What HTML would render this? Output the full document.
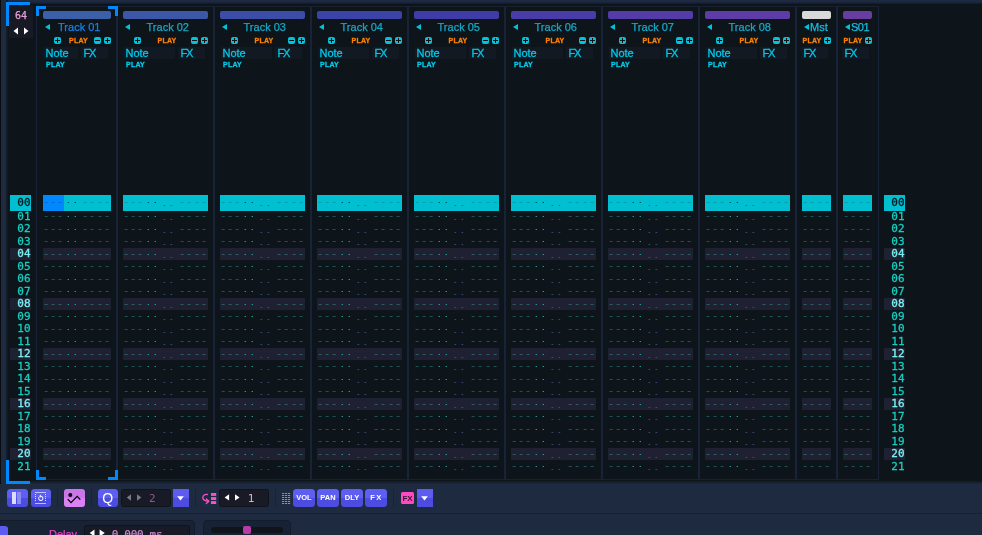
<!DOCTYPE html>
<html><head><meta charset="utf-8"><title>Pattern Editor</title>
<style>
html,body{margin:0;padding:0}
body{width:982px;height:535px;overflow:hidden;position:relative;background:#0d141a;font-family:"Liberation Sans",sans-serif}
#app{position:absolute;left:0;top:0;width:982px;height:535px;overflow:hidden;will-change:transform}
#app div,#app span,#app svg,#app i,#app b{position:absolute;box-sizing:border-box}
.t{white-space:nowrap;line-height:1}
.nm{-webkit-text-stroke:0.25px;font:11px/12px "Liberation Sans",sans-serif;color:#18a8c6;text-align:center;height:12px}
.lb{-webkit-text-stroke:0.3px;font:11px/12px "Liberation Sans",sans-serif;color:#00c8e8;height:12px}
.pl{-webkit-text-stroke:0.3px;font:bold 7px/7px "Liberation Sans",sans-serif;height:7px;letter-spacing:0.25px}
.or{color:#ff8000}
.cy{color:#00ccec}
.pm{width:7px;height:7px;border-radius:2px;background:linear-gradient(#0e141a,#0e141a) center/5px 1px no-repeat,linear-gradient(#0e141a,#0e141a) center/1px 5px no-repeat,#00c4dc}
.mn{width:7px;height:7px;border-radius:2px;background:linear-gradient(#0e141a,#0e141a) center/5px 1px no-repeat,#00c4dc}
.tri{width:0;height:0;border-top:3px solid transparent;border-bottom:3px solid transparent;border-right:5px solid #00c4dc}
.cb{height:8px;border-radius:2px}
.fb{background:#131922;height:12px;top:47px}
.ln{-webkit-text-stroke:0.3px;font:11px/11px "DejaVu Sans Mono","Liberation Mono",monospace;color:#14cfc2;width:21px;height:12px;text-align:right;padding-right:0.4px}
.ln.h4{background:#1f2133;color:#7af0ee}
.ln.h0{color:#021a20;margin-top:1px}
.r{font:11px/11px "DejaVu Sans Mono","Liberation Mono",monospace;height:12px;white-space:pre;color:#1f5253;letter-spacing:0.38px}
.r.h4{background:#1f2133;color:#2c5a5e}
.r.h0{color:#0a9aa8}
.r span,.r i,.r b{top:0;height:100%}
.r span{font-size:12px;letter-spacing:-0.22px;margin-left:-0.4px;margin-top:1px}
.r i{font-style:normal;color:#2a9c98;transform:scaleY(.5);transform-origin:0 7px}
.r.h0 i{color:#07444c}
.r.cur span:first-child{color:#0a68cc}
.r b{font-weight:normal;color:#44548a;margin-top:1px;letter-spacing:-1.02px;transform:scale(1.25,.5);transform-origin:3.3px 8px}
.r.h0 b{color:#0a6f80}
.sep{background:#18233a}
.btn{border-radius:3.5px;background:linear-gradient(#5e5ef3 50%,#4c4ce0 50%)}
.vb{background:#181b26;border:1px solid #10131b;border-radius:2.5px}
.bt{font:bold 7.5px/8px "Liberation Sans",sans-serif;color:#fff;text-align:center;height:8px;width:21.2px}
</style></head><body><div id="app">

<div style="left:0px;top:0px;width:982px;height:4px;background:linear-gradient(#1e2a40 0,#1c2740 50%,#131a27 100%)"></div>
<div style="left:0px;top:0px;width:6px;height:535px;background:#1e2a40"></div>
<div style="left:6px;top:0px;width:2px;height:481px;background:linear-gradient(90deg,#172031,#0f151c)"></div>
<div style="left:0px;top:0px;width:1px;height:506px;background:#080c0e"></div>
<div style="left:0px;top:484px;width:982px;height:51px;background:#1e2a40"></div>
<div style="left:8px;top:481px;width:974px;height:3px;background:linear-gradient(#121923,#1d283d)"></div>
<div style="left:36px;top:479px;width:843px;height:1px;background:#192130"></div>
<div style="left:0px;top:512.6px;width:982px;height:1.5px;background:#172033"></div>
<div class="sep" style="left:35.7px;top:6px;width:1.6px;height:474px;"></div>
<div class="sep" style="left:116px;top:6px;width:2px;height:474px;"></div>
<div class="sep" style="left:213px;top:6px;width:2px;height:474px;"></div>
<div class="sep" style="left:310px;top:6px;width:2px;height:474px;"></div>
<div class="sep" style="left:407px;top:6px;width:2px;height:474px;"></div>
<div class="sep" style="left:504px;top:6px;width:2px;height:474px;"></div>
<div class="sep" style="left:601px;top:6px;width:2px;height:474px;"></div>
<div class="sep" style="left:698px;top:6px;width:2px;height:474px;"></div>
<div class="sep" style="left:795px;top:6px;width:2px;height:474px;"></div>
<div class="sep" style="left:836px;top:6px;width:2px;height:474px;"></div>
<div class="sep" style="left:877.7px;top:6px;width:1.6px;height:474px;"></div>
<div style="left:36px;top:6px;width:843px;height:1px;background:#192130"></div>
<div style="left:6px;top:2px;width:24px;height:3px;background:#0088ff"></div>
<div style="left:6px;top:2px;width:3px;height:24px;background:#0088ff"></div>
<div style="left:6px;top:460px;width:3px;height:24px;background:#0088ff"></div>
<div style="left:6px;top:481px;width:24px;height:3px;background:#0088ff"></div>
<div style="left:9px;top:5px;width:24px;height:33px;background:#171a25"></div>
<div class="t" style="left:9px;top:9.6px;width:24px;height:12px;-webkit-text-stroke:0.25px;font:10px/12px 'DejaVu Sans Mono','Liberation Mono',monospace;color:#e6a0d8;text-align:center">64</div>
<svg style="left:13px;top:26.5px" width="16" height="8" viewBox="0 0 16 8"><path d="M0.5 4 L5 0.5 L5 7.5 Z M15.5 4 L11 0.5 L11 7.5 Z" fill="#fff"/></svg>
<div class="cb" style="left:43px;top:11px;width:68px;height:8px;background:#3c60a8"></div>
<div class="tri" style="left:44.5px;top:23.5px"></div>
<div class="t nm" style="left:49.25px;top:21px;width:60px;color:#1482ee;">Track 01</div>
<div class="pm" style="left:54px;top:37px"></div>
<div class="t pl or" style="left:69.0px;top:37px;width:19px">PLAY</div>
<div class="mn" style="left:94px;top:37px"></div>
<div class="pm" style="left:104px;top:37px"></div>
<div class="fb" style="left:44px;width:34px"></div>
<div class="t lb" style="left:45.5px;top:47px">Note</div>
<div class="fb" style="left:81px;width:27px"></div>
<div class="t lb" style="left:83.5px;top:47px;letter-spacing:-1.2px">FX</div>
<div class="t pl cy" style="left:46px;top:61px">PLAY</div>
<div class="cb" style="left:123px;top:11px;width:85px;height:8px;background:#3c57a8"></div>
<div class="tri" style="left:124.5px;top:23.5px"></div>
<div class="t nm" style="left:137.75px;top:21px;width:60px;">Track 02</div>
<div class="pm" style="left:134px;top:37px"></div>
<div class="t pl or" style="left:157.5px;top:37px;width:19px">PLAY</div>
<div class="mn" style="left:191px;top:37px"></div>
<div class="pm" style="left:201px;top:37px"></div>
<div class="fb" style="left:124px;width:51px"></div>
<div class="t lb" style="left:125.5px;top:47px">Note</div>
<div class="fb" style="left:178px;width:27px"></div>
<div class="t lb" style="left:180.5px;top:47px;letter-spacing:-1.2px">FX</div>
<div class="t pl cy" style="left:126px;top:61px">PLAY</div>
<div class="cb" style="left:220px;top:11px;width:85px;height:8px;background:#3c4da8"></div>
<div class="tri" style="left:221.5px;top:23.5px"></div>
<div class="t nm" style="left:234.75px;top:21px;width:60px;">Track 03</div>
<div class="pm" style="left:231px;top:37px"></div>
<div class="t pl or" style="left:254.5px;top:37px;width:19px">PLAY</div>
<div class="mn" style="left:288px;top:37px"></div>
<div class="pm" style="left:298px;top:37px"></div>
<div class="fb" style="left:221px;width:51px"></div>
<div class="t lb" style="left:222.5px;top:47px">Note</div>
<div class="fb" style="left:275px;width:27px"></div>
<div class="t lb" style="left:277.5px;top:47px;letter-spacing:-1.2px">FX</div>
<div class="t pl cy" style="left:223px;top:61px">PLAY</div>
<div class="cb" style="left:317px;top:11px;width:85px;height:8px;background:#3c43a8"></div>
<div class="tri" style="left:318.5px;top:23.5px"></div>
<div class="t nm" style="left:331.75px;top:21px;width:60px;">Track 04</div>
<div class="pm" style="left:328px;top:37px"></div>
<div class="t pl or" style="left:351.5px;top:37px;width:19px">PLAY</div>
<div class="mn" style="left:385px;top:37px"></div>
<div class="pm" style="left:395px;top:37px"></div>
<div class="fb" style="left:318px;width:51px"></div>
<div class="t lb" style="left:319.5px;top:47px">Note</div>
<div class="fb" style="left:372px;width:27px"></div>
<div class="t lb" style="left:374.5px;top:47px;letter-spacing:-1.2px">FX</div>
<div class="t pl cy" style="left:320px;top:61px">PLAY</div>
<div class="cb" style="left:414px;top:11px;width:85px;height:8px;background:#3f3ca8"></div>
<div class="tri" style="left:415.5px;top:23.5px"></div>
<div class="t nm" style="left:428.75px;top:21px;width:60px;">Track 05</div>
<div class="pm" style="left:425px;top:37px"></div>
<div class="t pl or" style="left:448.5px;top:37px;width:19px">PLAY</div>
<div class="mn" style="left:482px;top:37px"></div>
<div class="pm" style="left:492px;top:37px"></div>
<div class="fb" style="left:415px;width:51px"></div>
<div class="t lb" style="left:416.5px;top:47px">Note</div>
<div class="fb" style="left:469px;width:27px"></div>
<div class="t lb" style="left:471.5px;top:47px;letter-spacing:-1.2px">FX</div>
<div class="t pl cy" style="left:417px;top:61px">PLAY</div>
<div class="cb" style="left:511px;top:11px;width:85px;height:8px;background:#493ca8"></div>
<div class="tri" style="left:512.5px;top:23.5px"></div>
<div class="t nm" style="left:525.75px;top:21px;width:60px;">Track 06</div>
<div class="pm" style="left:522px;top:37px"></div>
<div class="t pl or" style="left:545.5px;top:37px;width:19px">PLAY</div>
<div class="mn" style="left:579px;top:37px"></div>
<div class="pm" style="left:589px;top:37px"></div>
<div class="fb" style="left:512px;width:51px"></div>
<div class="t lb" style="left:513.5px;top:47px">Note</div>
<div class="fb" style="left:566px;width:27px"></div>
<div class="t lb" style="left:568.5px;top:47px;letter-spacing:-1.2px">FX</div>
<div class="t pl cy" style="left:514px;top:61px">PLAY</div>
<div class="cb" style="left:608px;top:11px;width:85px;height:8px;background:#533ca8"></div>
<div class="tri" style="left:609.5px;top:23.5px"></div>
<div class="t nm" style="left:622.75px;top:21px;width:60px;">Track 07</div>
<div class="pm" style="left:619px;top:37px"></div>
<div class="t pl or" style="left:642.5px;top:37px;width:19px">PLAY</div>
<div class="mn" style="left:676px;top:37px"></div>
<div class="pm" style="left:686px;top:37px"></div>
<div class="fb" style="left:609px;width:51px"></div>
<div class="t lb" style="left:610.5px;top:47px">Note</div>
<div class="fb" style="left:663px;width:27px"></div>
<div class="t lb" style="left:665.5px;top:47px;letter-spacing:-1.2px">FX</div>
<div class="t pl cy" style="left:611px;top:61px">PLAY</div>
<div class="cb" style="left:705px;top:11px;width:85px;height:8px;background:#5d3ca8"></div>
<div class="tri" style="left:706.5px;top:23.5px"></div>
<div class="t nm" style="left:719.75px;top:21px;width:60px;">Track 08</div>
<div class="pm" style="left:716px;top:37px"></div>
<div class="t pl or" style="left:739.5px;top:37px;width:19px">PLAY</div>
<div class="mn" style="left:773px;top:37px"></div>
<div class="pm" style="left:783px;top:37px"></div>
<div class="fb" style="left:706px;width:51px"></div>
<div class="t lb" style="left:707.5px;top:47px">Note</div>
<div class="fb" style="left:760px;width:27px"></div>
<div class="t lb" style="left:762.5px;top:47px;letter-spacing:-1.2px">FX</div>
<div class="t pl cy" style="left:708px;top:61px">PLAY</div>
<div class="cb" style="left:802px;top:11px;width:29px;height:8px;background:#d9d9d9"></div>
<div class="tri" style="left:803.5px;top:23.5px"></div>
<div class="t nm" style="left:810px;top:21px;text-align:left;color:#14bfe0;">Mst</div>
<div class="t pl or" style="left:802.5px;top:37px">PLAY</div>
<div class="pm" style="left:824px;top:37px"></div>
<div class="fb" style="left:801px;width:27px"></div>
<div class="t lb" style="left:803.5px;top:47px;letter-spacing:-1.2px">FX</div>
<div class="cb" style="left:843px;top:11px;width:29px;height:8px;background:#693ca0"></div>
<div class="tri" style="left:844.5px;top:23.5px"></div>
<div class="t nm" style="left:851px;top:21px;text-align:left;color:#14bfe0;letter-spacing:-0.5px;">S01</div>
<div class="t pl or" style="left:843.5px;top:37px">PLAY</div>
<div class="pm" style="left:865px;top:37px"></div>
<div class="fb" style="left:842px;width:27px"></div>
<div class="t lb" style="left:844.5px;top:47px;letter-spacing:-1.2px">FX</div>
<div style="left:36px;top:6px;width:10px;height:3px;background:#0088ff"></div>
<div style="left:36px;top:6px;width:3px;height:10px;background:#0088ff"></div>
<div style="left:108px;top:6px;width:10px;height:3px;background:#0088ff"></div>
<div style="left:115px;top:6px;width:3px;height:10px;background:#0088ff"></div>
<div style="left:36px;top:477px;width:10px;height:3px;background:#0088ff"></div>
<div style="left:36px;top:470px;width:3px;height:10px;background:#0088ff"></div>
<div style="left:108px;top:477px;width:10px;height:3px;background:#0088ff"></div>
<div style="left:115px;top:470px;width:3px;height:10px;background:#0088ff"></div>
<div style="left:10px;top:195px;width:21px;height:16px;background:#00bfd0"></div>
<div class="t ln h0" style="left:10px;top:196px">00</div>
<div style="left:884px;top:195px;width:21px;height:16px;background:#00bfd0"></div>
<div class="t ln h0" style="left:884px;top:196px">00</div>
<div style="left:43px;top:195px;width:68px;height:16px;background:#00bfd0"></div>
<div style="left:43px;top:195px;width:21px;height:16px;background:#0088ff"></div>
<div class="r h0 cur" style="left:43px;top:196px;width:68px"><span style="left:0px">---</span><i style="left:22px">··</i><span style="left:39px">--</span><span style="left:54px">--</span></div>
<div style="left:123px;top:195px;width:85px;height:16px;background:#00bfd0"></div>
<div class="r h0" style="left:123px;top:196px;width:85px"><span style="left:0px">---</span><i style="left:22px">··</i><b style="left:38.4px">..</b><span style="left:56px">--</span><span style="left:71px">--</span></div>
<div style="left:220px;top:195px;width:85px;height:16px;background:#00bfd0"></div>
<div class="r h0" style="left:220px;top:196px;width:85px"><span style="left:0px">---</span><i style="left:22px">··</i><b style="left:38.4px">..</b><span style="left:56px">--</span><span style="left:71px">--</span></div>
<div style="left:317px;top:195px;width:85px;height:16px;background:#00bfd0"></div>
<div class="r h0" style="left:317px;top:196px;width:85px"><span style="left:0px">---</span><i style="left:22px">··</i><b style="left:38.4px">..</b><span style="left:56px">--</span><span style="left:71px">--</span></div>
<div style="left:414px;top:195px;width:85px;height:16px;background:#00bfd0"></div>
<div class="r h0" style="left:414px;top:196px;width:85px"><span style="left:0px">---</span><i style="left:22px">··</i><b style="left:38.4px">..</b><span style="left:56px">--</span><span style="left:71px">--</span></div>
<div style="left:511px;top:195px;width:85px;height:16px;background:#00bfd0"></div>
<div class="r h0" style="left:511px;top:196px;width:85px"><span style="left:0px">---</span><i style="left:22px">··</i><b style="left:38.4px">..</b><span style="left:56px">--</span><span style="left:71px">--</span></div>
<div style="left:608px;top:195px;width:85px;height:16px;background:#00bfd0"></div>
<div class="r h0" style="left:608px;top:196px;width:85px"><span style="left:0px">---</span><i style="left:22px">··</i><b style="left:38.4px">..</b><span style="left:56px">--</span><span style="left:71px">--</span></div>
<div style="left:705px;top:195px;width:85px;height:16px;background:#00bfd0"></div>
<div class="r h0" style="left:705px;top:196px;width:85px"><span style="left:0px">---</span><i style="left:22px">··</i><b style="left:38.4px">..</b><span style="left:56px">--</span><span style="left:71px">--</span></div>
<div style="left:802px;top:195px;width:29px;height:16px;background:#00bfd0"></div>
<div class="r h0" style="left:802px;top:196px;width:29px"><span style="left:0px">--</span><span style="left:15px">--</span></div>
<div style="left:843px;top:195px;width:29px;height:16px;background:#00bfd0"></div>
<div class="r h0" style="left:843px;top:196px;width:29px"><span style="left:0px">--</span><span style="left:15px">--</span></div>
<div class="t ln " style="left:10px;top:210.5px">01</div>
<div class="t ln " style="left:884px;top:210.5px">01</div>
<div class="r " style="left:43px;top:210px;width:68px"><span style="left:0px">---</span><i style="left:22px">··</i><span style="left:39px">--</span><span style="left:54px">--</span></div>
<div class="r " style="left:123px;top:210px;width:85px"><span style="left:0px">---</span><i style="left:22px">··</i><b style="left:38.4px">..</b><span style="left:56px">--</span><span style="left:71px">--</span></div>
<div class="r " style="left:220px;top:210px;width:85px"><span style="left:0px">---</span><i style="left:22px">··</i><b style="left:38.4px">..</b><span style="left:56px">--</span><span style="left:71px">--</span></div>
<div class="r " style="left:317px;top:210px;width:85px"><span style="left:0px">---</span><i style="left:22px">··</i><b style="left:38.4px">..</b><span style="left:56px">--</span><span style="left:71px">--</span></div>
<div class="r " style="left:414px;top:210px;width:85px"><span style="left:0px">---</span><i style="left:22px">··</i><b style="left:38.4px">..</b><span style="left:56px">--</span><span style="left:71px">--</span></div>
<div class="r " style="left:511px;top:210px;width:85px"><span style="left:0px">---</span><i style="left:22px">··</i><b style="left:38.4px">..</b><span style="left:56px">--</span><span style="left:71px">--</span></div>
<div class="r " style="left:608px;top:210px;width:85px"><span style="left:0px">---</span><i style="left:22px">··</i><b style="left:38.4px">..</b><span style="left:56px">--</span><span style="left:71px">--</span></div>
<div class="r " style="left:705px;top:210px;width:85px"><span style="left:0px">---</span><i style="left:22px">··</i><b style="left:38.4px">..</b><span style="left:56px">--</span><span style="left:71px">--</span></div>
<div class="r " style="left:802px;top:210px;width:29px"><span style="left:0px">--</span><span style="left:15px">--</span></div>
<div class="r " style="left:843px;top:210px;width:29px"><span style="left:0px">--</span><span style="left:15px">--</span></div>
<div class="t ln " style="left:10px;top:223.0px">02</div>
<div class="t ln " style="left:884px;top:223.0px">02</div>
<div class="r " style="left:43px;top:223px;width:68px"><span style="left:0px">---</span><i style="left:22px">··</i><span style="left:39px">--</span><span style="left:54px">--</span></div>
<div class="r " style="left:123px;top:223px;width:85px"><span style="left:0px">---</span><i style="left:22px">··</i><b style="left:38.4px">..</b><span style="left:56px">--</span><span style="left:71px">--</span></div>
<div class="r " style="left:220px;top:223px;width:85px"><span style="left:0px">---</span><i style="left:22px">··</i><b style="left:38.4px">..</b><span style="left:56px">--</span><span style="left:71px">--</span></div>
<div class="r " style="left:317px;top:223px;width:85px"><span style="left:0px">---</span><i style="left:22px">··</i><b style="left:38.4px">..</b><span style="left:56px">--</span><span style="left:71px">--</span></div>
<div class="r " style="left:414px;top:223px;width:85px"><span style="left:0px">---</span><i style="left:22px">··</i><b style="left:38.4px">..</b><span style="left:56px">--</span><span style="left:71px">--</span></div>
<div class="r " style="left:511px;top:223px;width:85px"><span style="left:0px">---</span><i style="left:22px">··</i><b style="left:38.4px">..</b><span style="left:56px">--</span><span style="left:71px">--</span></div>
<div class="r " style="left:608px;top:223px;width:85px"><span style="left:0px">---</span><i style="left:22px">··</i><b style="left:38.4px">..</b><span style="left:56px">--</span><span style="left:71px">--</span></div>
<div class="r " style="left:705px;top:223px;width:85px"><span style="left:0px">---</span><i style="left:22px">··</i><b style="left:38.4px">..</b><span style="left:56px">--</span><span style="left:71px">--</span></div>
<div class="r " style="left:802px;top:223px;width:29px"><span style="left:0px">--</span><span style="left:15px">--</span></div>
<div class="r " style="left:843px;top:223px;width:29px"><span style="left:0px">--</span><span style="left:15px">--</span></div>
<div class="t ln " style="left:10px;top:235.5px">03</div>
<div class="t ln " style="left:884px;top:235.5px">03</div>
<div class="r " style="left:43px;top:235px;width:68px"><span style="left:0px">---</span><i style="left:22px">··</i><span style="left:39px">--</span><span style="left:54px">--</span></div>
<div class="r " style="left:123px;top:235px;width:85px"><span style="left:0px">---</span><i style="left:22px">··</i><b style="left:38.4px">..</b><span style="left:56px">--</span><span style="left:71px">--</span></div>
<div class="r " style="left:220px;top:235px;width:85px"><span style="left:0px">---</span><i style="left:22px">··</i><b style="left:38.4px">..</b><span style="left:56px">--</span><span style="left:71px">--</span></div>
<div class="r " style="left:317px;top:235px;width:85px"><span style="left:0px">---</span><i style="left:22px">··</i><b style="left:38.4px">..</b><span style="left:56px">--</span><span style="left:71px">--</span></div>
<div class="r " style="left:414px;top:235px;width:85px"><span style="left:0px">---</span><i style="left:22px">··</i><b style="left:38.4px">..</b><span style="left:56px">--</span><span style="left:71px">--</span></div>
<div class="r " style="left:511px;top:235px;width:85px"><span style="left:0px">---</span><i style="left:22px">··</i><b style="left:38.4px">..</b><span style="left:56px">--</span><span style="left:71px">--</span></div>
<div class="r " style="left:608px;top:235px;width:85px"><span style="left:0px">---</span><i style="left:22px">··</i><b style="left:38.4px">..</b><span style="left:56px">--</span><span style="left:71px">--</span></div>
<div class="r " style="left:705px;top:235px;width:85px"><span style="left:0px">---</span><i style="left:22px">··</i><b style="left:38.4px">..</b><span style="left:56px">--</span><span style="left:71px">--</span></div>
<div class="r " style="left:802px;top:235px;width:29px"><span style="left:0px">--</span><span style="left:15px">--</span></div>
<div class="r " style="left:843px;top:235px;width:29px"><span style="left:0px">--</span><span style="left:15px">--</span></div>
<div class="t ln h4" style="left:10px;top:248.0px">04</div>
<div class="t ln h4" style="left:884px;top:248.0px">04</div>
<div class="r h4" style="left:43px;top:248px;width:68px"><span style="left:0px">---</span><i style="left:22px">··</i><span style="left:39px">--</span><span style="left:54px">--</span></div>
<div class="r h4" style="left:123px;top:248px;width:85px"><span style="left:0px">---</span><i style="left:22px">··</i><b style="left:38.4px">..</b><span style="left:56px">--</span><span style="left:71px">--</span></div>
<div class="r h4" style="left:220px;top:248px;width:85px"><span style="left:0px">---</span><i style="left:22px">··</i><b style="left:38.4px">..</b><span style="left:56px">--</span><span style="left:71px">--</span></div>
<div class="r h4" style="left:317px;top:248px;width:85px"><span style="left:0px">---</span><i style="left:22px">··</i><b style="left:38.4px">..</b><span style="left:56px">--</span><span style="left:71px">--</span></div>
<div class="r h4" style="left:414px;top:248px;width:85px"><span style="left:0px">---</span><i style="left:22px">··</i><b style="left:38.4px">..</b><span style="left:56px">--</span><span style="left:71px">--</span></div>
<div class="r h4" style="left:511px;top:248px;width:85px"><span style="left:0px">---</span><i style="left:22px">··</i><b style="left:38.4px">..</b><span style="left:56px">--</span><span style="left:71px">--</span></div>
<div class="r h4" style="left:608px;top:248px;width:85px"><span style="left:0px">---</span><i style="left:22px">··</i><b style="left:38.4px">..</b><span style="left:56px">--</span><span style="left:71px">--</span></div>
<div class="r h4" style="left:705px;top:248px;width:85px"><span style="left:0px">---</span><i style="left:22px">··</i><b style="left:38.4px">..</b><span style="left:56px">--</span><span style="left:71px">--</span></div>
<div class="r h4" style="left:802px;top:248px;width:29px"><span style="left:0px">--</span><span style="left:15px">--</span></div>
<div class="r h4" style="left:843px;top:248px;width:29px"><span style="left:0px">--</span><span style="left:15px">--</span></div>
<div class="t ln " style="left:10px;top:260.5px">05</div>
<div class="t ln " style="left:884px;top:260.5px">05</div>
<div class="r " style="left:43px;top:260px;width:68px"><span style="left:0px">---</span><i style="left:22px">··</i><span style="left:39px">--</span><span style="left:54px">--</span></div>
<div class="r " style="left:123px;top:260px;width:85px"><span style="left:0px">---</span><i style="left:22px">··</i><b style="left:38.4px">..</b><span style="left:56px">--</span><span style="left:71px">--</span></div>
<div class="r " style="left:220px;top:260px;width:85px"><span style="left:0px">---</span><i style="left:22px">··</i><b style="left:38.4px">..</b><span style="left:56px">--</span><span style="left:71px">--</span></div>
<div class="r " style="left:317px;top:260px;width:85px"><span style="left:0px">---</span><i style="left:22px">··</i><b style="left:38.4px">..</b><span style="left:56px">--</span><span style="left:71px">--</span></div>
<div class="r " style="left:414px;top:260px;width:85px"><span style="left:0px">---</span><i style="left:22px">··</i><b style="left:38.4px">..</b><span style="left:56px">--</span><span style="left:71px">--</span></div>
<div class="r " style="left:511px;top:260px;width:85px"><span style="left:0px">---</span><i style="left:22px">··</i><b style="left:38.4px">..</b><span style="left:56px">--</span><span style="left:71px">--</span></div>
<div class="r " style="left:608px;top:260px;width:85px"><span style="left:0px">---</span><i style="left:22px">··</i><b style="left:38.4px">..</b><span style="left:56px">--</span><span style="left:71px">--</span></div>
<div class="r " style="left:705px;top:260px;width:85px"><span style="left:0px">---</span><i style="left:22px">··</i><b style="left:38.4px">..</b><span style="left:56px">--</span><span style="left:71px">--</span></div>
<div class="r " style="left:802px;top:260px;width:29px"><span style="left:0px">--</span><span style="left:15px">--</span></div>
<div class="r " style="left:843px;top:260px;width:29px"><span style="left:0px">--</span><span style="left:15px">--</span></div>
<div class="t ln " style="left:10px;top:273.0px">06</div>
<div class="t ln " style="left:884px;top:273.0px">06</div>
<div class="r " style="left:43px;top:273px;width:68px"><span style="left:0px">---</span><i style="left:22px">··</i><span style="left:39px">--</span><span style="left:54px">--</span></div>
<div class="r " style="left:123px;top:273px;width:85px"><span style="left:0px">---</span><i style="left:22px">··</i><b style="left:38.4px">..</b><span style="left:56px">--</span><span style="left:71px">--</span></div>
<div class="r " style="left:220px;top:273px;width:85px"><span style="left:0px">---</span><i style="left:22px">··</i><b style="left:38.4px">..</b><span style="left:56px">--</span><span style="left:71px">--</span></div>
<div class="r " style="left:317px;top:273px;width:85px"><span style="left:0px">---</span><i style="left:22px">··</i><b style="left:38.4px">..</b><span style="left:56px">--</span><span style="left:71px">--</span></div>
<div class="r " style="left:414px;top:273px;width:85px"><span style="left:0px">---</span><i style="left:22px">··</i><b style="left:38.4px">..</b><span style="left:56px">--</span><span style="left:71px">--</span></div>
<div class="r " style="left:511px;top:273px;width:85px"><span style="left:0px">---</span><i style="left:22px">··</i><b style="left:38.4px">..</b><span style="left:56px">--</span><span style="left:71px">--</span></div>
<div class="r " style="left:608px;top:273px;width:85px"><span style="left:0px">---</span><i style="left:22px">··</i><b style="left:38.4px">..</b><span style="left:56px">--</span><span style="left:71px">--</span></div>
<div class="r " style="left:705px;top:273px;width:85px"><span style="left:0px">---</span><i style="left:22px">··</i><b style="left:38.4px">..</b><span style="left:56px">--</span><span style="left:71px">--</span></div>
<div class="r " style="left:802px;top:273px;width:29px"><span style="left:0px">--</span><span style="left:15px">--</span></div>
<div class="r " style="left:843px;top:273px;width:29px"><span style="left:0px">--</span><span style="left:15px">--</span></div>
<div class="t ln " style="left:10px;top:285.5px">07</div>
<div class="t ln " style="left:884px;top:285.5px">07</div>
<div class="r " style="left:43px;top:285px;width:68px"><span style="left:0px">---</span><i style="left:22px">··</i><span style="left:39px">--</span><span style="left:54px">--</span></div>
<div class="r " style="left:123px;top:285px;width:85px"><span style="left:0px">---</span><i style="left:22px">··</i><b style="left:38.4px">..</b><span style="left:56px">--</span><span style="left:71px">--</span></div>
<div class="r " style="left:220px;top:285px;width:85px"><span style="left:0px">---</span><i style="left:22px">··</i><b style="left:38.4px">..</b><span style="left:56px">--</span><span style="left:71px">--</span></div>
<div class="r " style="left:317px;top:285px;width:85px"><span style="left:0px">---</span><i style="left:22px">··</i><b style="left:38.4px">..</b><span style="left:56px">--</span><span style="left:71px">--</span></div>
<div class="r " style="left:414px;top:285px;width:85px"><span style="left:0px">---</span><i style="left:22px">··</i><b style="left:38.4px">..</b><span style="left:56px">--</span><span style="left:71px">--</span></div>
<div class="r " style="left:511px;top:285px;width:85px"><span style="left:0px">---</span><i style="left:22px">··</i><b style="left:38.4px">..</b><span style="left:56px">--</span><span style="left:71px">--</span></div>
<div class="r " style="left:608px;top:285px;width:85px"><span style="left:0px">---</span><i style="left:22px">··</i><b style="left:38.4px">..</b><span style="left:56px">--</span><span style="left:71px">--</span></div>
<div class="r " style="left:705px;top:285px;width:85px"><span style="left:0px">---</span><i style="left:22px">··</i><b style="left:38.4px">..</b><span style="left:56px">--</span><span style="left:71px">--</span></div>
<div class="r " style="left:802px;top:285px;width:29px"><span style="left:0px">--</span><span style="left:15px">--</span></div>
<div class="r " style="left:843px;top:285px;width:29px"><span style="left:0px">--</span><span style="left:15px">--</span></div>
<div class="t ln h4" style="left:10px;top:298.0px">08</div>
<div class="t ln h4" style="left:884px;top:298.0px">08</div>
<div class="r h4" style="left:43px;top:298px;width:68px"><span style="left:0px">---</span><i style="left:22px">··</i><span style="left:39px">--</span><span style="left:54px">--</span></div>
<div class="r h4" style="left:123px;top:298px;width:85px"><span style="left:0px">---</span><i style="left:22px">··</i><b style="left:38.4px">..</b><span style="left:56px">--</span><span style="left:71px">--</span></div>
<div class="r h4" style="left:220px;top:298px;width:85px"><span style="left:0px">---</span><i style="left:22px">··</i><b style="left:38.4px">..</b><span style="left:56px">--</span><span style="left:71px">--</span></div>
<div class="r h4" style="left:317px;top:298px;width:85px"><span style="left:0px">---</span><i style="left:22px">··</i><b style="left:38.4px">..</b><span style="left:56px">--</span><span style="left:71px">--</span></div>
<div class="r h4" style="left:414px;top:298px;width:85px"><span style="left:0px">---</span><i style="left:22px">··</i><b style="left:38.4px">..</b><span style="left:56px">--</span><span style="left:71px">--</span></div>
<div class="r h4" style="left:511px;top:298px;width:85px"><span style="left:0px">---</span><i style="left:22px">··</i><b style="left:38.4px">..</b><span style="left:56px">--</span><span style="left:71px">--</span></div>
<div class="r h4" style="left:608px;top:298px;width:85px"><span style="left:0px">---</span><i style="left:22px">··</i><b style="left:38.4px">..</b><span style="left:56px">--</span><span style="left:71px">--</span></div>
<div class="r h4" style="left:705px;top:298px;width:85px"><span style="left:0px">---</span><i style="left:22px">··</i><b style="left:38.4px">..</b><span style="left:56px">--</span><span style="left:71px">--</span></div>
<div class="r h4" style="left:802px;top:298px;width:29px"><span style="left:0px">--</span><span style="left:15px">--</span></div>
<div class="r h4" style="left:843px;top:298px;width:29px"><span style="left:0px">--</span><span style="left:15px">--</span></div>
<div class="t ln " style="left:10px;top:310.5px">09</div>
<div class="t ln " style="left:884px;top:310.5px">09</div>
<div class="r " style="left:43px;top:310px;width:68px"><span style="left:0px">---</span><i style="left:22px">··</i><span style="left:39px">--</span><span style="left:54px">--</span></div>
<div class="r " style="left:123px;top:310px;width:85px"><span style="left:0px">---</span><i style="left:22px">··</i><b style="left:38.4px">..</b><span style="left:56px">--</span><span style="left:71px">--</span></div>
<div class="r " style="left:220px;top:310px;width:85px"><span style="left:0px">---</span><i style="left:22px">··</i><b style="left:38.4px">..</b><span style="left:56px">--</span><span style="left:71px">--</span></div>
<div class="r " style="left:317px;top:310px;width:85px"><span style="left:0px">---</span><i style="left:22px">··</i><b style="left:38.4px">..</b><span style="left:56px">--</span><span style="left:71px">--</span></div>
<div class="r " style="left:414px;top:310px;width:85px"><span style="left:0px">---</span><i style="left:22px">··</i><b style="left:38.4px">..</b><span style="left:56px">--</span><span style="left:71px">--</span></div>
<div class="r " style="left:511px;top:310px;width:85px"><span style="left:0px">---</span><i style="left:22px">··</i><b style="left:38.4px">..</b><span style="left:56px">--</span><span style="left:71px">--</span></div>
<div class="r " style="left:608px;top:310px;width:85px"><span style="left:0px">---</span><i style="left:22px">··</i><b style="left:38.4px">..</b><span style="left:56px">--</span><span style="left:71px">--</span></div>
<div class="r " style="left:705px;top:310px;width:85px"><span style="left:0px">---</span><i style="left:22px">··</i><b style="left:38.4px">..</b><span style="left:56px">--</span><span style="left:71px">--</span></div>
<div class="r " style="left:802px;top:310px;width:29px"><span style="left:0px">--</span><span style="left:15px">--</span></div>
<div class="r " style="left:843px;top:310px;width:29px"><span style="left:0px">--</span><span style="left:15px">--</span></div>
<div class="t ln " style="left:10px;top:323.0px">10</div>
<div class="t ln " style="left:884px;top:323.0px">10</div>
<div class="r " style="left:43px;top:323px;width:68px"><span style="left:0px">---</span><i style="left:22px">··</i><span style="left:39px">--</span><span style="left:54px">--</span></div>
<div class="r " style="left:123px;top:323px;width:85px"><span style="left:0px">---</span><i style="left:22px">··</i><b style="left:38.4px">..</b><span style="left:56px">--</span><span style="left:71px">--</span></div>
<div class="r " style="left:220px;top:323px;width:85px"><span style="left:0px">---</span><i style="left:22px">··</i><b style="left:38.4px">..</b><span style="left:56px">--</span><span style="left:71px">--</span></div>
<div class="r " style="left:317px;top:323px;width:85px"><span style="left:0px">---</span><i style="left:22px">··</i><b style="left:38.4px">..</b><span style="left:56px">--</span><span style="left:71px">--</span></div>
<div class="r " style="left:414px;top:323px;width:85px"><span style="left:0px">---</span><i style="left:22px">··</i><b style="left:38.4px">..</b><span style="left:56px">--</span><span style="left:71px">--</span></div>
<div class="r " style="left:511px;top:323px;width:85px"><span style="left:0px">---</span><i style="left:22px">··</i><b style="left:38.4px">..</b><span style="left:56px">--</span><span style="left:71px">--</span></div>
<div class="r " style="left:608px;top:323px;width:85px"><span style="left:0px">---</span><i style="left:22px">··</i><b style="left:38.4px">..</b><span style="left:56px">--</span><span style="left:71px">--</span></div>
<div class="r " style="left:705px;top:323px;width:85px"><span style="left:0px">---</span><i style="left:22px">··</i><b style="left:38.4px">..</b><span style="left:56px">--</span><span style="left:71px">--</span></div>
<div class="r " style="left:802px;top:323px;width:29px"><span style="left:0px">--</span><span style="left:15px">--</span></div>
<div class="r " style="left:843px;top:323px;width:29px"><span style="left:0px">--</span><span style="left:15px">--</span></div>
<div class="t ln " style="left:10px;top:335.5px">11</div>
<div class="t ln " style="left:884px;top:335.5px">11</div>
<div class="r " style="left:43px;top:335px;width:68px"><span style="left:0px">---</span><i style="left:22px">··</i><span style="left:39px">--</span><span style="left:54px">--</span></div>
<div class="r " style="left:123px;top:335px;width:85px"><span style="left:0px">---</span><i style="left:22px">··</i><b style="left:38.4px">..</b><span style="left:56px">--</span><span style="left:71px">--</span></div>
<div class="r " style="left:220px;top:335px;width:85px"><span style="left:0px">---</span><i style="left:22px">··</i><b style="left:38.4px">..</b><span style="left:56px">--</span><span style="left:71px">--</span></div>
<div class="r " style="left:317px;top:335px;width:85px"><span style="left:0px">---</span><i style="left:22px">··</i><b style="left:38.4px">..</b><span style="left:56px">--</span><span style="left:71px">--</span></div>
<div class="r " style="left:414px;top:335px;width:85px"><span style="left:0px">---</span><i style="left:22px">··</i><b style="left:38.4px">..</b><span style="left:56px">--</span><span style="left:71px">--</span></div>
<div class="r " style="left:511px;top:335px;width:85px"><span style="left:0px">---</span><i style="left:22px">··</i><b style="left:38.4px">..</b><span style="left:56px">--</span><span style="left:71px">--</span></div>
<div class="r " style="left:608px;top:335px;width:85px"><span style="left:0px">---</span><i style="left:22px">··</i><b style="left:38.4px">..</b><span style="left:56px">--</span><span style="left:71px">--</span></div>
<div class="r " style="left:705px;top:335px;width:85px"><span style="left:0px">---</span><i style="left:22px">··</i><b style="left:38.4px">..</b><span style="left:56px">--</span><span style="left:71px">--</span></div>
<div class="r " style="left:802px;top:335px;width:29px"><span style="left:0px">--</span><span style="left:15px">--</span></div>
<div class="r " style="left:843px;top:335px;width:29px"><span style="left:0px">--</span><span style="left:15px">--</span></div>
<div class="t ln h4" style="left:10px;top:348.0px">12</div>
<div class="t ln h4" style="left:884px;top:348.0px">12</div>
<div class="r h4" style="left:43px;top:348px;width:68px"><span style="left:0px">---</span><i style="left:22px">··</i><span style="left:39px">--</span><span style="left:54px">--</span></div>
<div class="r h4" style="left:123px;top:348px;width:85px"><span style="left:0px">---</span><i style="left:22px">··</i><b style="left:38.4px">..</b><span style="left:56px">--</span><span style="left:71px">--</span></div>
<div class="r h4" style="left:220px;top:348px;width:85px"><span style="left:0px">---</span><i style="left:22px">··</i><b style="left:38.4px">..</b><span style="left:56px">--</span><span style="left:71px">--</span></div>
<div class="r h4" style="left:317px;top:348px;width:85px"><span style="left:0px">---</span><i style="left:22px">··</i><b style="left:38.4px">..</b><span style="left:56px">--</span><span style="left:71px">--</span></div>
<div class="r h4" style="left:414px;top:348px;width:85px"><span style="left:0px">---</span><i style="left:22px">··</i><b style="left:38.4px">..</b><span style="left:56px">--</span><span style="left:71px">--</span></div>
<div class="r h4" style="left:511px;top:348px;width:85px"><span style="left:0px">---</span><i style="left:22px">··</i><b style="left:38.4px">..</b><span style="left:56px">--</span><span style="left:71px">--</span></div>
<div class="r h4" style="left:608px;top:348px;width:85px"><span style="left:0px">---</span><i style="left:22px">··</i><b style="left:38.4px">..</b><span style="left:56px">--</span><span style="left:71px">--</span></div>
<div class="r h4" style="left:705px;top:348px;width:85px"><span style="left:0px">---</span><i style="left:22px">··</i><b style="left:38.4px">..</b><span style="left:56px">--</span><span style="left:71px">--</span></div>
<div class="r h4" style="left:802px;top:348px;width:29px"><span style="left:0px">--</span><span style="left:15px">--</span></div>
<div class="r h4" style="left:843px;top:348px;width:29px"><span style="left:0px">--</span><span style="left:15px">--</span></div>
<div class="t ln " style="left:10px;top:360.5px">13</div>
<div class="t ln " style="left:884px;top:360.5px">13</div>
<div class="r " style="left:43px;top:360px;width:68px"><span style="left:0px">---</span><i style="left:22px">··</i><span style="left:39px">--</span><span style="left:54px">--</span></div>
<div class="r " style="left:123px;top:360px;width:85px"><span style="left:0px">---</span><i style="left:22px">··</i><b style="left:38.4px">..</b><span style="left:56px">--</span><span style="left:71px">--</span></div>
<div class="r " style="left:220px;top:360px;width:85px"><span style="left:0px">---</span><i style="left:22px">··</i><b style="left:38.4px">..</b><span style="left:56px">--</span><span style="left:71px">--</span></div>
<div class="r " style="left:317px;top:360px;width:85px"><span style="left:0px">---</span><i style="left:22px">··</i><b style="left:38.4px">..</b><span style="left:56px">--</span><span style="left:71px">--</span></div>
<div class="r " style="left:414px;top:360px;width:85px"><span style="left:0px">---</span><i style="left:22px">··</i><b style="left:38.4px">..</b><span style="left:56px">--</span><span style="left:71px">--</span></div>
<div class="r " style="left:511px;top:360px;width:85px"><span style="left:0px">---</span><i style="left:22px">··</i><b style="left:38.4px">..</b><span style="left:56px">--</span><span style="left:71px">--</span></div>
<div class="r " style="left:608px;top:360px;width:85px"><span style="left:0px">---</span><i style="left:22px">··</i><b style="left:38.4px">..</b><span style="left:56px">--</span><span style="left:71px">--</span></div>
<div class="r " style="left:705px;top:360px;width:85px"><span style="left:0px">---</span><i style="left:22px">··</i><b style="left:38.4px">..</b><span style="left:56px">--</span><span style="left:71px">--</span></div>
<div class="r " style="left:802px;top:360px;width:29px"><span style="left:0px">--</span><span style="left:15px">--</span></div>
<div class="r " style="left:843px;top:360px;width:29px"><span style="left:0px">--</span><span style="left:15px">--</span></div>
<div class="t ln " style="left:10px;top:373.0px">14</div>
<div class="t ln " style="left:884px;top:373.0px">14</div>
<div class="r " style="left:43px;top:373px;width:68px"><span style="left:0px">---</span><i style="left:22px">··</i><span style="left:39px">--</span><span style="left:54px">--</span></div>
<div class="r " style="left:123px;top:373px;width:85px"><span style="left:0px">---</span><i style="left:22px">··</i><b style="left:38.4px">..</b><span style="left:56px">--</span><span style="left:71px">--</span></div>
<div class="r " style="left:220px;top:373px;width:85px"><span style="left:0px">---</span><i style="left:22px">··</i><b style="left:38.4px">..</b><span style="left:56px">--</span><span style="left:71px">--</span></div>
<div class="r " style="left:317px;top:373px;width:85px"><span style="left:0px">---</span><i style="left:22px">··</i><b style="left:38.4px">..</b><span style="left:56px">--</span><span style="left:71px">--</span></div>
<div class="r " style="left:414px;top:373px;width:85px"><span style="left:0px">---</span><i style="left:22px">··</i><b style="left:38.4px">..</b><span style="left:56px">--</span><span style="left:71px">--</span></div>
<div class="r " style="left:511px;top:373px;width:85px"><span style="left:0px">---</span><i style="left:22px">··</i><b style="left:38.4px">..</b><span style="left:56px">--</span><span style="left:71px">--</span></div>
<div class="r " style="left:608px;top:373px;width:85px"><span style="left:0px">---</span><i style="left:22px">··</i><b style="left:38.4px">..</b><span style="left:56px">--</span><span style="left:71px">--</span></div>
<div class="r " style="left:705px;top:373px;width:85px"><span style="left:0px">---</span><i style="left:22px">··</i><b style="left:38.4px">..</b><span style="left:56px">--</span><span style="left:71px">--</span></div>
<div class="r " style="left:802px;top:373px;width:29px"><span style="left:0px">--</span><span style="left:15px">--</span></div>
<div class="r " style="left:843px;top:373px;width:29px"><span style="left:0px">--</span><span style="left:15px">--</span></div>
<div class="t ln " style="left:10px;top:385.5px">15</div>
<div class="t ln " style="left:884px;top:385.5px">15</div>
<div class="r " style="left:43px;top:385px;width:68px"><span style="left:0px">---</span><i style="left:22px">··</i><span style="left:39px">--</span><span style="left:54px">--</span></div>
<div class="r " style="left:123px;top:385px;width:85px"><span style="left:0px">---</span><i style="left:22px">··</i><b style="left:38.4px">..</b><span style="left:56px">--</span><span style="left:71px">--</span></div>
<div class="r " style="left:220px;top:385px;width:85px"><span style="left:0px">---</span><i style="left:22px">··</i><b style="left:38.4px">..</b><span style="left:56px">--</span><span style="left:71px">--</span></div>
<div class="r " style="left:317px;top:385px;width:85px"><span style="left:0px">---</span><i style="left:22px">··</i><b style="left:38.4px">..</b><span style="left:56px">--</span><span style="left:71px">--</span></div>
<div class="r " style="left:414px;top:385px;width:85px"><span style="left:0px">---</span><i style="left:22px">··</i><b style="left:38.4px">..</b><span style="left:56px">--</span><span style="left:71px">--</span></div>
<div class="r " style="left:511px;top:385px;width:85px"><span style="left:0px">---</span><i style="left:22px">··</i><b style="left:38.4px">..</b><span style="left:56px">--</span><span style="left:71px">--</span></div>
<div class="r " style="left:608px;top:385px;width:85px"><span style="left:0px">---</span><i style="left:22px">··</i><b style="left:38.4px">..</b><span style="left:56px">--</span><span style="left:71px">--</span></div>
<div class="r " style="left:705px;top:385px;width:85px"><span style="left:0px">---</span><i style="left:22px">··</i><b style="left:38.4px">..</b><span style="left:56px">--</span><span style="left:71px">--</span></div>
<div class="r " style="left:802px;top:385px;width:29px"><span style="left:0px">--</span><span style="left:15px">--</span></div>
<div class="r " style="left:843px;top:385px;width:29px"><span style="left:0px">--</span><span style="left:15px">--</span></div>
<div class="t ln h4" style="left:10px;top:398.0px">16</div>
<div class="t ln h4" style="left:884px;top:398.0px">16</div>
<div class="r h4" style="left:43px;top:398px;width:68px"><span style="left:0px">---</span><i style="left:22px">··</i><span style="left:39px">--</span><span style="left:54px">--</span></div>
<div class="r h4" style="left:123px;top:398px;width:85px"><span style="left:0px">---</span><i style="left:22px">··</i><b style="left:38.4px">..</b><span style="left:56px">--</span><span style="left:71px">--</span></div>
<div class="r h4" style="left:220px;top:398px;width:85px"><span style="left:0px">---</span><i style="left:22px">··</i><b style="left:38.4px">..</b><span style="left:56px">--</span><span style="left:71px">--</span></div>
<div class="r h4" style="left:317px;top:398px;width:85px"><span style="left:0px">---</span><i style="left:22px">··</i><b style="left:38.4px">..</b><span style="left:56px">--</span><span style="left:71px">--</span></div>
<div class="r h4" style="left:414px;top:398px;width:85px"><span style="left:0px">---</span><i style="left:22px">··</i><b style="left:38.4px">..</b><span style="left:56px">--</span><span style="left:71px">--</span></div>
<div class="r h4" style="left:511px;top:398px;width:85px"><span style="left:0px">---</span><i style="left:22px">··</i><b style="left:38.4px">..</b><span style="left:56px">--</span><span style="left:71px">--</span></div>
<div class="r h4" style="left:608px;top:398px;width:85px"><span style="left:0px">---</span><i style="left:22px">··</i><b style="left:38.4px">..</b><span style="left:56px">--</span><span style="left:71px">--</span></div>
<div class="r h4" style="left:705px;top:398px;width:85px"><span style="left:0px">---</span><i style="left:22px">··</i><b style="left:38.4px">..</b><span style="left:56px">--</span><span style="left:71px">--</span></div>
<div class="r h4" style="left:802px;top:398px;width:29px"><span style="left:0px">--</span><span style="left:15px">--</span></div>
<div class="r h4" style="left:843px;top:398px;width:29px"><span style="left:0px">--</span><span style="left:15px">--</span></div>
<div class="t ln " style="left:10px;top:410.5px">17</div>
<div class="t ln " style="left:884px;top:410.5px">17</div>
<div class="r " style="left:43px;top:410px;width:68px"><span style="left:0px">---</span><i style="left:22px">··</i><span style="left:39px">--</span><span style="left:54px">--</span></div>
<div class="r " style="left:123px;top:410px;width:85px"><span style="left:0px">---</span><i style="left:22px">··</i><b style="left:38.4px">..</b><span style="left:56px">--</span><span style="left:71px">--</span></div>
<div class="r " style="left:220px;top:410px;width:85px"><span style="left:0px">---</span><i style="left:22px">··</i><b style="left:38.4px">..</b><span style="left:56px">--</span><span style="left:71px">--</span></div>
<div class="r " style="left:317px;top:410px;width:85px"><span style="left:0px">---</span><i style="left:22px">··</i><b style="left:38.4px">..</b><span style="left:56px">--</span><span style="left:71px">--</span></div>
<div class="r " style="left:414px;top:410px;width:85px"><span style="left:0px">---</span><i style="left:22px">··</i><b style="left:38.4px">..</b><span style="left:56px">--</span><span style="left:71px">--</span></div>
<div class="r " style="left:511px;top:410px;width:85px"><span style="left:0px">---</span><i style="left:22px">··</i><b style="left:38.4px">..</b><span style="left:56px">--</span><span style="left:71px">--</span></div>
<div class="r " style="left:608px;top:410px;width:85px"><span style="left:0px">---</span><i style="left:22px">··</i><b style="left:38.4px">..</b><span style="left:56px">--</span><span style="left:71px">--</span></div>
<div class="r " style="left:705px;top:410px;width:85px"><span style="left:0px">---</span><i style="left:22px">··</i><b style="left:38.4px">..</b><span style="left:56px">--</span><span style="left:71px">--</span></div>
<div class="r " style="left:802px;top:410px;width:29px"><span style="left:0px">--</span><span style="left:15px">--</span></div>
<div class="r " style="left:843px;top:410px;width:29px"><span style="left:0px">--</span><span style="left:15px">--</span></div>
<div class="t ln " style="left:10px;top:423.0px">18</div>
<div class="t ln " style="left:884px;top:423.0px">18</div>
<div class="r " style="left:43px;top:423px;width:68px"><span style="left:0px">---</span><i style="left:22px">··</i><span style="left:39px">--</span><span style="left:54px">--</span></div>
<div class="r " style="left:123px;top:423px;width:85px"><span style="left:0px">---</span><i style="left:22px">··</i><b style="left:38.4px">..</b><span style="left:56px">--</span><span style="left:71px">--</span></div>
<div class="r " style="left:220px;top:423px;width:85px"><span style="left:0px">---</span><i style="left:22px">··</i><b style="left:38.4px">..</b><span style="left:56px">--</span><span style="left:71px">--</span></div>
<div class="r " style="left:317px;top:423px;width:85px"><span style="left:0px">---</span><i style="left:22px">··</i><b style="left:38.4px">..</b><span style="left:56px">--</span><span style="left:71px">--</span></div>
<div class="r " style="left:414px;top:423px;width:85px"><span style="left:0px">---</span><i style="left:22px">··</i><b style="left:38.4px">..</b><span style="left:56px">--</span><span style="left:71px">--</span></div>
<div class="r " style="left:511px;top:423px;width:85px"><span style="left:0px">---</span><i style="left:22px">··</i><b style="left:38.4px">..</b><span style="left:56px">--</span><span style="left:71px">--</span></div>
<div class="r " style="left:608px;top:423px;width:85px"><span style="left:0px">---</span><i style="left:22px">··</i><b style="left:38.4px">..</b><span style="left:56px">--</span><span style="left:71px">--</span></div>
<div class="r " style="left:705px;top:423px;width:85px"><span style="left:0px">---</span><i style="left:22px">··</i><b style="left:38.4px">..</b><span style="left:56px">--</span><span style="left:71px">--</span></div>
<div class="r " style="left:802px;top:423px;width:29px"><span style="left:0px">--</span><span style="left:15px">--</span></div>
<div class="r " style="left:843px;top:423px;width:29px"><span style="left:0px">--</span><span style="left:15px">--</span></div>
<div class="t ln " style="left:10px;top:435.5px">19</div>
<div class="t ln " style="left:884px;top:435.5px">19</div>
<div class="r " style="left:43px;top:435px;width:68px"><span style="left:0px">---</span><i style="left:22px">··</i><span style="left:39px">--</span><span style="left:54px">--</span></div>
<div class="r " style="left:123px;top:435px;width:85px"><span style="left:0px">---</span><i style="left:22px">··</i><b style="left:38.4px">..</b><span style="left:56px">--</span><span style="left:71px">--</span></div>
<div class="r " style="left:220px;top:435px;width:85px"><span style="left:0px">---</span><i style="left:22px">··</i><b style="left:38.4px">..</b><span style="left:56px">--</span><span style="left:71px">--</span></div>
<div class="r " style="left:317px;top:435px;width:85px"><span style="left:0px">---</span><i style="left:22px">··</i><b style="left:38.4px">..</b><span style="left:56px">--</span><span style="left:71px">--</span></div>
<div class="r " style="left:414px;top:435px;width:85px"><span style="left:0px">---</span><i style="left:22px">··</i><b style="left:38.4px">..</b><span style="left:56px">--</span><span style="left:71px">--</span></div>
<div class="r " style="left:511px;top:435px;width:85px"><span style="left:0px">---</span><i style="left:22px">··</i><b style="left:38.4px">..</b><span style="left:56px">--</span><span style="left:71px">--</span></div>
<div class="r " style="left:608px;top:435px;width:85px"><span style="left:0px">---</span><i style="left:22px">··</i><b style="left:38.4px">..</b><span style="left:56px">--</span><span style="left:71px">--</span></div>
<div class="r " style="left:705px;top:435px;width:85px"><span style="left:0px">---</span><i style="left:22px">··</i><b style="left:38.4px">..</b><span style="left:56px">--</span><span style="left:71px">--</span></div>
<div class="r " style="left:802px;top:435px;width:29px"><span style="left:0px">--</span><span style="left:15px">--</span></div>
<div class="r " style="left:843px;top:435px;width:29px"><span style="left:0px">--</span><span style="left:15px">--</span></div>
<div class="t ln h4" style="left:10px;top:448.0px">20</div>
<div class="t ln h4" style="left:884px;top:448.0px">20</div>
<div class="r h4" style="left:43px;top:448px;width:68px"><span style="left:0px">---</span><i style="left:22px">··</i><span style="left:39px">--</span><span style="left:54px">--</span></div>
<div class="r h4" style="left:123px;top:448px;width:85px"><span style="left:0px">---</span><i style="left:22px">··</i><b style="left:38.4px">..</b><span style="left:56px">--</span><span style="left:71px">--</span></div>
<div class="r h4" style="left:220px;top:448px;width:85px"><span style="left:0px">---</span><i style="left:22px">··</i><b style="left:38.4px">..</b><span style="left:56px">--</span><span style="left:71px">--</span></div>
<div class="r h4" style="left:317px;top:448px;width:85px"><span style="left:0px">---</span><i style="left:22px">··</i><b style="left:38.4px">..</b><span style="left:56px">--</span><span style="left:71px">--</span></div>
<div class="r h4" style="left:414px;top:448px;width:85px"><span style="left:0px">---</span><i style="left:22px">··</i><b style="left:38.4px">..</b><span style="left:56px">--</span><span style="left:71px">--</span></div>
<div class="r h4" style="left:511px;top:448px;width:85px"><span style="left:0px">---</span><i style="left:22px">··</i><b style="left:38.4px">..</b><span style="left:56px">--</span><span style="left:71px">--</span></div>
<div class="r h4" style="left:608px;top:448px;width:85px"><span style="left:0px">---</span><i style="left:22px">··</i><b style="left:38.4px">..</b><span style="left:56px">--</span><span style="left:71px">--</span></div>
<div class="r h4" style="left:705px;top:448px;width:85px"><span style="left:0px">---</span><i style="left:22px">··</i><b style="left:38.4px">..</b><span style="left:56px">--</span><span style="left:71px">--</span></div>
<div class="r h4" style="left:802px;top:448px;width:29px"><span style="left:0px">--</span><span style="left:15px">--</span></div>
<div class="r h4" style="left:843px;top:448px;width:29px"><span style="left:0px">--</span><span style="left:15px">--</span></div>
<div class="t ln " style="left:10px;top:460.5px">21</div>
<div class="t ln " style="left:884px;top:460.5px">21</div>
<div class="r " style="left:43px;top:460px;width:68px"><span style="left:0px">---</span><i style="left:22px">··</i><span style="left:39px">--</span><span style="left:54px">--</span></div>
<div class="r " style="left:123px;top:460px;width:85px"><span style="left:0px">---</span><i style="left:22px">··</i><b style="left:38.4px">..</b><span style="left:56px">--</span><span style="left:71px">--</span></div>
<div class="r " style="left:220px;top:460px;width:85px"><span style="left:0px">---</span><i style="left:22px">··</i><b style="left:38.4px">..</b><span style="left:56px">--</span><span style="left:71px">--</span></div>
<div class="r " style="left:317px;top:460px;width:85px"><span style="left:0px">---</span><i style="left:22px">··</i><b style="left:38.4px">..</b><span style="left:56px">--</span><span style="left:71px">--</span></div>
<div class="r " style="left:414px;top:460px;width:85px"><span style="left:0px">---</span><i style="left:22px">··</i><b style="left:38.4px">..</b><span style="left:56px">--</span><span style="left:71px">--</span></div>
<div class="r " style="left:511px;top:460px;width:85px"><span style="left:0px">---</span><i style="left:22px">··</i><b style="left:38.4px">..</b><span style="left:56px">--</span><span style="left:71px">--</span></div>
<div class="r " style="left:608px;top:460px;width:85px"><span style="left:0px">---</span><i style="left:22px">··</i><b style="left:38.4px">..</b><span style="left:56px">--</span><span style="left:71px">--</span></div>
<div class="r " style="left:705px;top:460px;width:85px"><span style="left:0px">---</span><i style="left:22px">··</i><b style="left:38.4px">..</b><span style="left:56px">--</span><span style="left:71px">--</span></div>
<div class="r " style="left:802px;top:460px;width:29px"><span style="left:0px">--</span><span style="left:15px">--</span></div>
<div class="r " style="left:843px;top:460px;width:29px"><span style="left:0px">--</span><span style="left:15px">--</span></div>
<div class="btn" style="left:7.2px;top:489.2px;width:20.5px;height:17.5px;"><div style="left:4.5px;top:3px;width:4px;height:12px;background:#dcdcff"></div><div style="left:9.5px;top:3px;width:4px;height:12px;background:#8b8bf2"></div></div>
<div class="btn" style="left:30.5px;top:489.2px;width:20px;height:17.5px;"><svg style="left:-0.5px;top:0" width="21" height="18" viewBox="0 0 21 18"><g fill="#dcdcff"><rect x="5" y="3" width="11" height="1" opacity=".8"/><rect x="5" y="14" width="11" height="1" opacity=".8"/><rect x="5" y="5" width="1" height="1"/><rect x="5" y="7" width="1" height="1"/><rect x="5" y="9" width="1" height="1"/><rect x="5" y="11" width="1" height="1"/><rect x="15" y="5" width="1" height="1"/><rect x="15" y="7" width="1" height="1"/><rect x="15" y="9" width="1" height="1"/><rect x="15" y="11" width="1" height="1"/></g><path d="M9 8.3 A2.1 2.1 0 1 0 10.6 7.3" fill="none" stroke="#e8e8ff" stroke-width="1.1"/><path d="M11 5.6 L8.9 7.3 L11 8.8 Z" fill="#e8e8ff"/></svg></div>
<div style="left:57.2px;top:489px;width:1px;height:18px;background:#18223a"></div>
<div style="left:64.3px;top:489px;width:20.5px;height:18px;border-radius:3px;background:linear-gradient(#cb76e8 50%,#da82f4 50%)"><svg style="left:0;top:0" width="20" height="18" viewBox="0 0 20 18"><circle cx="6.3" cy="6" r="2" fill="#000"/><path d="M3.7 10.1 L7 13.7 L13.2 7.3 L16.3 10.6" fill="none" stroke="#000" stroke-width="1.25"/></svg></div>
<div style="left:91.2px;top:489px;width:1px;height:18px;background:#18223a"></div>
<div class="btn" style="left:98.3px;top:489.2px;width:20px;height:17.5px;"><div class="t" style="left:-0.6px;top:0.5px;width:20px;height:16px;font:14px/16px 'Liberation Sans',sans-serif;color:#fff;text-align:center">Q</div></div>
<div class="vb" style="left:121px;top:489px;width:50px;height:18px"><svg style="left:4px;top:4px" width="16" height="7" viewBox="0 0 16 7"><path d="M0.8 3.5 L5 0.3 L5 6.7 Z M15.3 3.5 L11 0.3 L11 6.7 Z" fill="#777a80"/></svg><div class="t" style="left:27px;top:2.5px;font:11px/11px 'DejaVu Sans Mono','Liberation Mono',monospace;color:#8c5c8e">2</div></div>
<div style="left:173px;top:489px;width:16px;height:18px;background:linear-gradient(#5c5cf0 50%,#4c4ce0 50%)"><svg style="left:4px;top:7px" width="7" height="5" viewBox="0 0 7 5"><path d="M0.2 0.2 L6.8 0.2 L3.5 4.6 Z" fill="#fff"/></svg></div>
<div style="left:195px;top:489px;width:1px;height:18px;background:#18223a"></div>
<svg style="left:201px;top:492px" width="16" height="13" viewBox="0 0 16 13"><g fill="#ff4fc4"><rect x="10" y="1" width="5.2" height="2.9"/><rect x="10" y="5.1" width="5.2" height="2.9"/><rect x="10" y="9.1" width="5.2" height="2.9"/></g><path d="M6.3 2.5 C3.6 2.1 1.7 3.7 1.8 5.6 C2 7.9 4.4 9.1 7.4 9.3" fill="none" stroke="#ff4fc4" stroke-width="1.3" stroke-linecap="round"/><path d="M5.3 7 L7.9 9.3 L5.3 11.5" fill="none" stroke="#ff4fc4" stroke-width="1.3" stroke-linecap="round" stroke-linejoin="round"/></svg>
<div class="vb" style="left:219px;top:489px;width:50px;height:18px"><svg style="left:4px;top:4px" width="16" height="7" viewBox="0 0 16 7"><path d="M0.6 3.4 L5.1 0.2 L5.1 6.6 Z M15.6 3.4 L11 0.2 L11 6.6 Z" fill="#fff"/></svg><div class="t" style="left:27.7px;top:2.5px;font:11px/11px 'DejaVu Sans Mono','Liberation Mono',monospace;color:#eaa4e2">1</div></div>
<div style="left:275px;top:489px;width:1px;height:18px;background:#18223a"></div>
<svg style="left:282px;top:493px" width="9" height="12" viewBox="0 0 9 12"><g fill="#ff4fc4"><rect x="0" y="0" width="2.2" height="1"/><rect x="0" y="2" width="2.2" height="1"/><rect x="0" y="4" width="2.2" height="1"/><rect x="0" y="6" width="2.2" height="1"/><rect x="0" y="8" width="2.2" height="1"/><rect x="0" y="10" width="2.2" height="1"/><rect x="3" y="0" width="2.2" height="1"/><rect x="3" y="2" width="2.2" height="1"/><rect x="3" y="4" width="2.2" height="1"/><rect x="3" y="6" width="2.2" height="1"/><rect x="3" y="8" width="2.2" height="1"/><rect x="3" y="10" width="2.2" height="1"/><rect x="6" y="0" width="2.2" height="1"/><rect x="6" y="2" width="2.2" height="1"/><rect x="6" y="4" width="2.2" height="1"/><rect x="6" y="6" width="2.2" height="1"/><rect x="6" y="8" width="2.2" height="1"/><rect x="6" y="10" width="2.2" height="1"/></g></svg>
<div class="btn" style="left:293.4px;top:489.2px;width:21.2px;height:17.5px;"><div class="t bt" style="left:0;top:5.3px;">VOL</div></div>
<div class="btn" style="left:317.4px;top:489.2px;width:21.2px;height:17.5px;"><div class="t bt" style="left:0;top:5.3px;">PAN</div></div>
<div class="btn" style="left:341.4px;top:489.2px;width:21.2px;height:17.5px;"><div class="t bt" style="left:0;top:5.3px;">DLY</div></div>
<div class="btn" style="left:365.4px;top:489.2px;width:21.2px;height:17.5px;"><div class="t bt" style="left:0;top:5.3px;letter-spacing:1.6px;padding-left:1.2px;">FX</div></div>
<div style="left:393px;top:489px;width:1px;height:18px;background:#18223a"></div>
<div style="left:401px;top:492px;width:13px;height:12px;border-radius:1.5px;background:#ff48c2"><div class="t" style="left:0;top:2.5px;width:13px;height:8px;font:bold 8px/8px 'Liberation Sans',sans-serif;color:#3a1230;text-align:center">FX</div></div>
<div style="left:417px;top:489px;width:16px;height:18px;background:linear-gradient(#5c5cf0 50%,#4c4ce0 50%)"><svg style="left:4px;top:7px" width="7" height="5" viewBox="0 0 7 5"><path d="M0.2 0.2 L6.8 0.2 L3.5 4.6 Z" fill="#fff"/></svg></div>
<div style="left:-6px;top:520px;width:200.8px;height:30px;border-radius:4px;background:#182235;border:1px solid #141c2b"></div>
<div style="left:-4px;top:525.5px;width:11.5px;height:20px;border-radius:3px;background:#5c5cf0"></div>
<div class="t" style="left:49px;top:527.5px;-webkit-text-stroke:0.2px;font:11px/12px 'Liberation Sans',sans-serif;color:#ea48c8">Delay</div>
<div class="vb" style="left:84px;top:525px;width:106px;height:20px"><svg style="left:4px;top:3px" width="17" height="8" viewBox="0 0 17 8"><path d="M0.7 4 L5.5 0.5 L5.5 7.5 Z M15.8 4 L10.6 0.5 L10.6 7.5 Z" fill="#fff"/></svg><div class="t" style="left:26.7px;top:2.5px;-webkit-text-stroke:0.25px;font:11px/11px 'DejaVu Sans Mono','Liberation Mono',monospace;color:#c486c6;letter-spacing:-0.3px">0.000 ms</div></div>
<div style="left:203px;top:520px;width:88px;height:30px;border-radius:4px;background:#182235;border:1px solid #141c2b"></div>
<div style="left:211px;top:526.8px;width:72px;height:6.2px;border-radius:3px;background:#0f151b"></div>
<div style="left:243px;top:525.8px;width:8.3px;height:8.2px;border-radius:2px;background:#ba3aaa"></div>
</div></body></html>
